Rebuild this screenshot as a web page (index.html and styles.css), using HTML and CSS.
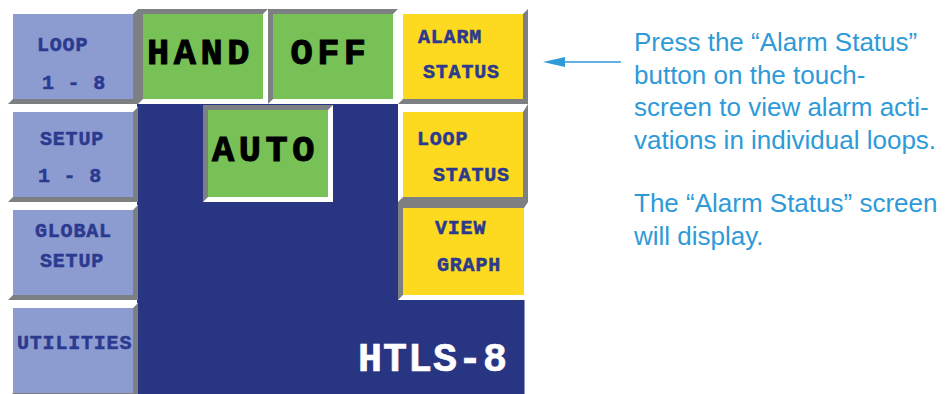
FILE: index.html
```html
<!DOCTYPE html>
<html lang="en">
<head>
<meta charset="UTF-8" />
<title>HTLS-8 Alarm Status</title>
<link rel="stylesheet" href="styles.css">
</head>
<body>
  <div class="page">
    <div class="screen">
      <div class="key side raised k-loop"><div>LOOP</div><div class="ln2">1 - 8</div></div>
      <div class="key mode inset k-hand">HAND</div>
      <div class="key mode inset k-off">OFF</div>
      <div class="key status raised k-alarm"><div>ALARM</div><div class="ln2">STATUS</div></div>

      <div class="panel"></div>
      <div class="model">HTLS-8</div>

      <div class="key side raised k-setup"><div>SETUP</div><div class="ln2">1 - 8</div></div>
      <div class="key mode inset k-auto">AUTO</div>
      <div class="key status raised k-lstat"><div>LOOP</div><div class="ln2">STATUS</div></div>

      <div class="key side raised k-global"><div>GLOBAL</div><div class="ln2">SETUP</div></div>
      <div class="key status inset k-graph"><div>VIEW</div><div class="ln2">GRAPH</div></div>

      <div class="key side raised k-util"><div>UTILITIES</div></div>
    </div>

    <div class="note">
      <svg class="arrow" width="78" height="12" viewBox="0 0 78 12">
        <line x1="14" y1="6" x2="78" y2="6" stroke="#2f9ad8" stroke-width="1.5" />
        <polygon points="0,6 22,1 22,11" fill="#2f9ad8" />
      </svg>
      <div class="text">
        <p>Press the “Alarm Status”<br>button on the touch-<br>screen to view alarm acti-<br>vations in individual loops.</p>
        <p>The “Alarm Status” screen<br>will display.</p>
      </div>
    </div>
  </div>
</body>
</html>
```

FILE: styles.css
```css
body {
  margin: 0;
  background: #ffffff;
  overflow: hidden;
}

.page {
  display: flex;
  align-items: flex-start;
  padding: 9px 0 0 8px;
}

/* Touch screen */
.screen {
  display: grid;
  grid-template-columns: repeat(4, 130px);
  grid-template-rows: repeat(4, 98px);
  font-family: "Liberation Mono", "DejaVu Sans Mono", monospace;
  font-weight: 700;
}

.key {
  box-sizing: border-box;
  height: 95px;
  border: 5px solid;
  align-self: start;
}
.raised {
  border-color: #ffffff #7c8083 #7c8083 #ffffff;
}
.inset {
  border-color: #7c8083 #ffffff #ffffff #7c8083;
}

.side {
  grid-column: 1;
  background: #8d9cd0;
  color: #2b3a8f;
  font-size: 20px;
  letter-spacing: 0.8px;
  -webkit-text-stroke: 0.5px #2b3a8f;
}
.status {
  grid-column: 4;
  background: #fdd91f;
  color: #2b3a8f;
  font-size: 20px;
  letter-spacing: 0.8px;
  -webkit-text-stroke: 0.5px #2b3a8f;
}
.mode {
  background: #77c157;
  color: #000;
  font-size: 37px;
  letter-spacing: 4.5px;
  -webkit-text-stroke: 1px #000;
  display: flex;
  align-items: center;
  justify-content: center;
  padding: 0 5px 6px 0;
}

/* left column */
.k-loop { grid-row: 1; padding: 13px 0 0 24px; line-height: 38px; }
.k-loop .ln2 { padding-left: 5px; }
.k-setup { grid-row: 2; padding: 9px 0 0 27px; line-height: 37px; }
.k-setup .ln2 { margin-left: -2px; }
.k-global { grid-row: 3; padding: 7px 0 0 22px; line-height: 30px; }
.k-global .ln2 { padding-left: 5px; }
.k-util { grid-row: 4; padding: 18px 0 0 4px; line-height: 36px; }

/* mode keys */
.k-hand { grid-column: 2; grid-row: 1; }
.k-off { grid-column: 3; grid-row: 1; }
.k-auto {
  grid-column: 2 / 4;
  grid-row: 2;
  justify-self: center;
  width: 130px;
  height: 97px;
  margin-top: -2px;
}

/* right column */
.k-alarm { grid-row: 1; padding: 6px 0 0 15px; line-height: 35px; }
.k-alarm .ln2 { padding-left: 5px; }
.k-lstat {
  grid-row: 2;
  height: 98px;
  margin-top: -3px;
  border-top-width: 8px;
  padding: 10px 0 0 14px;
  line-height: 36px;
}
.k-lstat .ln2 { padding-left: 16px; }
.k-graph {
  grid-row: 3;
  height: 98px;
  margin-top: -3px;
  border-top-width: 6px;
  border-right-width: 4px;
  padding: 2px 0 0 32px;
  line-height: 37px;
}
.k-graph .ln2 { padding-left: 2px; }

.panel {
  grid-column: 2 / 5;
  grid-row: 2 / 5;
  margin: -3px 3px 0 -1px;
  background: #283582;
  border-right: 1px solid #8e96c4;
}

.model {
  grid-column: 2 / 5;
  grid-row: 4;
  justify-self: end;
  align-self: start;
  margin: 38px 20px 0 0;
  color: #ffffff;
  font-size: 40px;
  line-height: 40px;
  letter-spacing: 1px;
  -webkit-text-stroke: 0.6px #ffffff;
}

/* Explanation */
.note {
  display: flex;
  align-items: flex-start;
  margin-left: 15px;
}
.arrow {
  margin-top: 47px;
}
.text {
  margin-left: 13px;
  margin-top: 17px;
  font-family: "Liberation Sans", Arial, sans-serif;
  font-size: 26px;
  line-height: 32.5px;
  color: #2f9ad8;
  white-space: nowrap;
}
.text p {
  margin: 0 0 31px;
}
```
